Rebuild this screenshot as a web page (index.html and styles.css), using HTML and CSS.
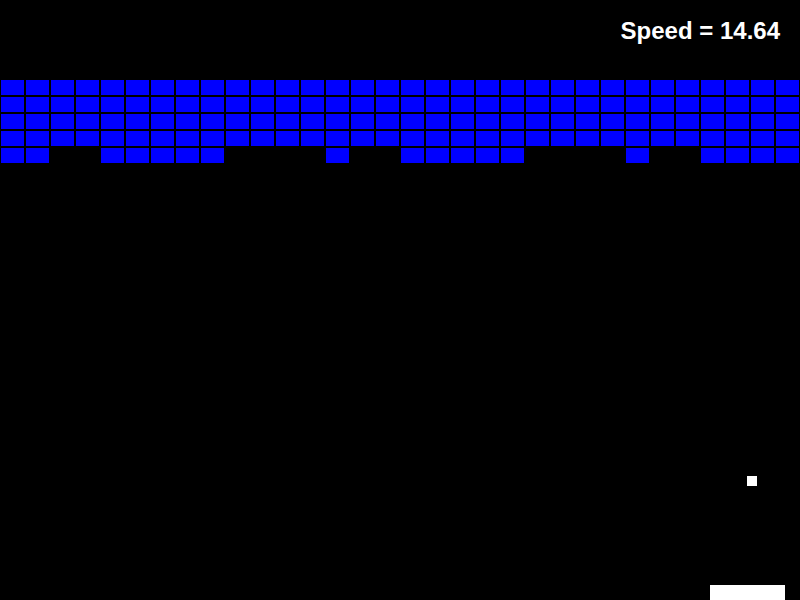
FILE: index.html
```html
<!DOCTYPE html>
<html>
<head>
<meta charset="utf-8">
<title>Breakout</title>
<link rel="stylesheet" href="styles.css">
</head>
<body>
<main class="stage">
  <header class="hud"><span class="speed">Speed = 14.64</span></header>
  <section class="wall">
    <div class="b"></div><div class="b"></div><div class="b"></div><div class="b"></div><div class="b"></div><div class="b"></div><div class="b"></div><div class="b"></div><div class="b"></div><div class="b"></div><div class="b"></div><div class="b"></div><div class="b"></div><div class="b"></div><div class="b"></div><div class="b"></div><div class="b"></div><div class="b"></div><div class="b"></div><div class="b"></div><div class="b"></div><div class="b"></div><div class="b"></div><div class="b"></div><div class="b"></div><div class="b"></div><div class="b"></div><div class="b"></div><div class="b"></div><div class="b"></div><div class="b"></div><div class="b"></div>
    <div class="b"></div><div class="b"></div><div class="b"></div><div class="b"></div><div class="b"></div><div class="b"></div><div class="b"></div><div class="b"></div><div class="b"></div><div class="b"></div><div class="b"></div><div class="b"></div><div class="b"></div><div class="b"></div><div class="b"></div><div class="b"></div><div class="b"></div><div class="b"></div><div class="b"></div><div class="b"></div><div class="b"></div><div class="b"></div><div class="b"></div><div class="b"></div><div class="b"></div><div class="b"></div><div class="b"></div><div class="b"></div><div class="b"></div><div class="b"></div><div class="b"></div><div class="b"></div>
    <div class="b"></div><div class="b"></div><div class="b"></div><div class="b"></div><div class="b"></div><div class="b"></div><div class="b"></div><div class="b"></div><div class="b"></div><div class="b"></div><div class="b"></div><div class="b"></div><div class="b"></div><div class="b"></div><div class="b"></div><div class="b"></div><div class="b"></div><div class="b"></div><div class="b"></div><div class="b"></div><div class="b"></div><div class="b"></div><div class="b"></div><div class="b"></div><div class="b"></div><div class="b"></div><div class="b"></div><div class="b"></div><div class="b"></div><div class="b"></div><div class="b"></div><div class="b"></div>
    <div class="b"></div><div class="b"></div><div class="b"></div><div class="b"></div><div class="b"></div><div class="b"></div><div class="b"></div><div class="b"></div><div class="b"></div><div class="b"></div><div class="b"></div><div class="b"></div><div class="b"></div><div class="b"></div><div class="b"></div><div class="b"></div><div class="b"></div><div class="b"></div><div class="b"></div><div class="b"></div><div class="b"></div><div class="b"></div><div class="b"></div><div class="b"></div><div class="b"></div><div class="b"></div><div class="b"></div><div class="b"></div><div class="b"></div><div class="b"></div><div class="b"></div><div class="b"></div>
    <div class="b"></div><div class="b"></div><div class="e"></div><div class="e"></div><div class="b"></div><div class="b"></div><div class="b"></div><div class="b"></div><div class="b"></div><div class="e"></div><div class="e"></div><div class="e"></div><div class="e"></div><div class="b"></div><div class="e"></div><div class="e"></div><div class="b"></div><div class="b"></div><div class="b"></div><div class="b"></div><div class="b"></div><div class="e"></div><div class="e"></div><div class="e"></div><div class="e"></div><div class="b"></div><div class="e"></div><div class="e"></div><div class="b"></div><div class="b"></div><div class="b"></div><div class="b"></div>
  </section>
  <div class="ball"></div>
  <div class="paddle"></div>
</main>
</body>
</html>
```

FILE: styles.css
```css
html, body {
  margin: 0;
  padding: 0;
  background: #000;
}

.stage {
  position: relative;
  width: 800px;
  height: 600px;
  overflow: hidden;
  background: #000;
}

.hud {
  box-sizing: border-box;
  height: 80px;
  padding: 19px 20px 0 0;
  text-align: right;
}

.speed {
  font-family: "Liberation Sans", Arial, sans-serif;
  font-weight: bold;
  font-size: 24px;
  line-height: 24px;
  color: #fff;
}

.wall {
  display: grid;
  grid-template-columns: repeat(32, 23px);
  grid-auto-rows: 15px;
  gap: 2px;
  padding-left: 1px;
}

.b {
  background: #0000ff;
}

.e {
  background: transparent;
}

.ball {
  position: absolute;
  left: 747px;
  top: 476px;
  width: 10px;
  height: 10px;
  background: #fff;
}

.paddle {
  position: absolute;
  left: 710px;
  top: 585px;
  width: 75px;
  height: 15px;
  background: #fff;
}
```
